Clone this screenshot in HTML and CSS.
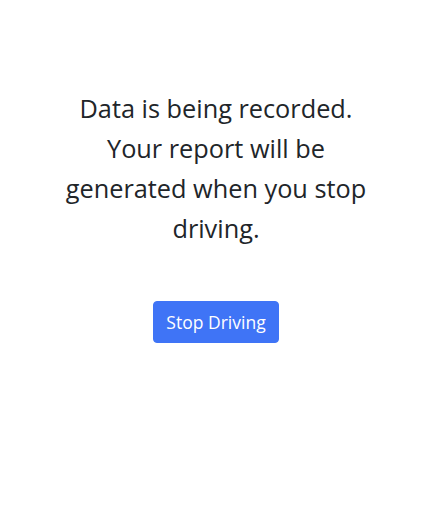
FILE: index.html
```html
<!DOCTYPE html>
<html>
<head>
<meta charset="utf-8">
<link rel="stylesheet" href="styles.css">
</head>
<body>
<main class="page">
  <p class="message">Data is being recorded.<br>Your report will be<br>generated when you stop<br>driving.</p>
  <button class="btn-stop" type="button">Stop Driving</button>
</main>
</body>
</html>
```
FILE: styles.css
```css
html, body {
  margin: 0;
  padding: 0;
  background: #ffffff;
}
body {
  font-family: "Open Sans", "Noto Sans", "Liberation Sans", sans-serif;
  color: #212529;
}
.page {
  display: flex;
  flex-direction: column;
  align-items: center;
  padding-top: 88px;
  padding-left: 5px;
}
.message {
  margin: 0;
  font-size: 25.3px;
  line-height: 40px;
  text-align: center;
}
.btn-stop {
  margin-top: 53px;
  font-family: inherit;
  font-size: 17.5px;
  line-height: 28px;
  color: #ffffff;
  background: #3f74f6;
  border: 1px solid #3f74f6;
  border-radius: 4px;
  padding: 6px 12.5px;
  cursor: pointer;
}
```
